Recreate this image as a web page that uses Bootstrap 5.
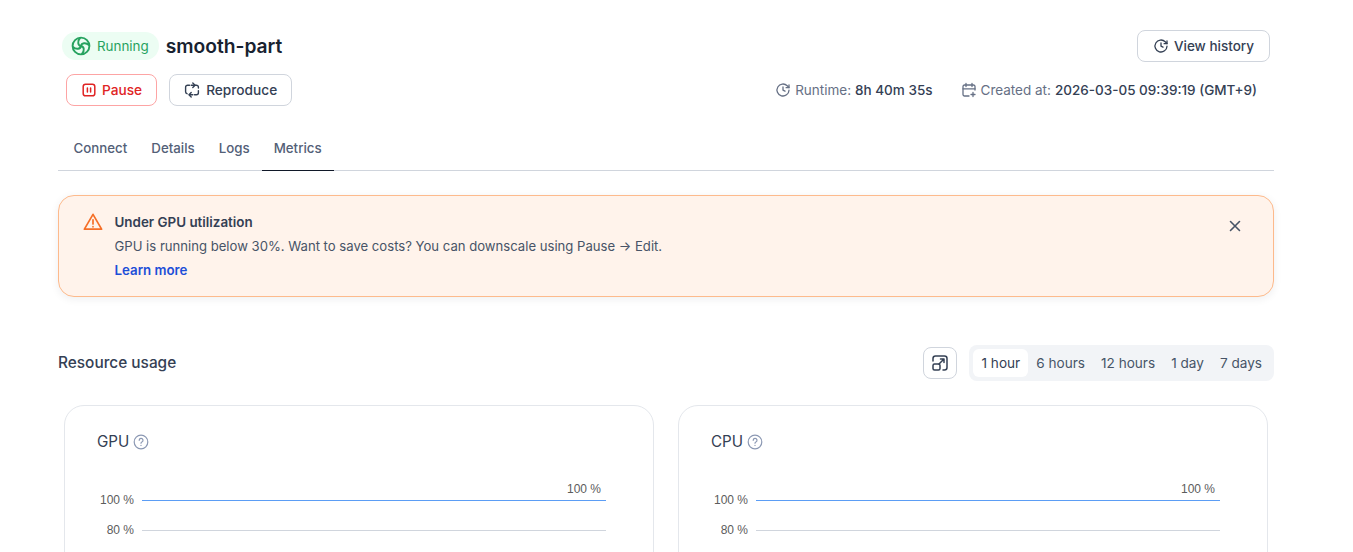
<!DOCTYPE html>
<html lang="en">
<head>
    <meta charset="UTF-8">
    <meta name="viewport" content="width=device-width, initial-scale=1.0">
    <title>smooth-part - Metrics</title>
    <link rel="stylesheet" href="https://cdn.jsdelivr.net/npm/bootstrap@5.3.0/dist/css/bootstrap.min.css">
    <style>
        html, body { height: 552px; overflow: hidden; }
        body { font-family: Inter, "Liberation Sans", sans-serif; font-size: 13.5px; color: #344054; background: #fff; }
        .page-wrap { width: 1216px; margin-left: 58px; padding-top: 30px; }
        .head-top { height: 32px; padding-left: 4px; padding-right: 4px; }
        .status-pill { height: 28px; padding: 0 10px 0 9px; gap: 6px; border-radius: 14px; background: #ecfdf3; color: #27a25f; font-size: 13.4px; }
        .inst-name { font-size: 19.2px; font-weight: 600; color: #182230; margin-left: 7px; line-height: 32px; }
        .head-actions { margin-top: 12px; height: 32px; padding-left: 8px; padding-right: 17px; }
        .act-btn { height: 32px; padding: 2px 15px 0; gap: 5px; font-size: 13.5px; font-weight: 500; line-height: 1; border-radius: 8px; border: 1px solid #d0d5dd; color: #344054; background: #fff; }
        .act-btn svg { margin-top: -2px; }
        .act-pause { color: #e02424; border-color: #fda4a4; padding: 2px 14px 0; font-size: 13.7px; }
        .act-repro { margin-left: 12px; padding: 2px 14px 0; gap: 6px; font-size: 13.7px; }
        .meta-group { gap: 28px; }
        .meta-txt { color: #667085; gap: 4px; font-size: 13.5px; }
        .meta-txt b { font-weight: 500; color: #344054; }
        .tab-row { margin-top: 23px; height: 42px; border-bottom: 1px solid #d0d5dd; padding-left: 3.500px; }
        .tab-item { padding: 0 12px; height: 42px; line-height: 38px; color: #536077; font-weight: 500; font-size: 13.3px; }
        .tab-item.on { border-bottom: 1px solid #101828; }
        .warn-box { margin-top: 24px; height: 102px; border: 1px solid #fdba8c; border-radius: 16px; background: #fff3eb; box-shadow: 0 2px 8px rgba(16,24,40,.07); padding: 16px 24px; gap: 11.5px; }
        .warn-title { font-size: 13.4px; font-weight: 600; color: #344054; line-height: 20px; }
        .warn-text { font-size: 13.12px; color: #475467; line-height: 20px; margin-top: 4px; }
        .warn-link { display: block; font-size: 13.3px; color: #1d4ed8; font-weight: 600; line-height: 20px; margin-top: 4px; text-decoration: none; }
        .warn-close { margin-left: auto; margin-top: 6px; margin-right: 6px; width: 16px; height: 16px; }
        .usage-head { margin-top: 48px; height: 36px; }
        .usage-title { font-size: 15.4px; font-weight: 500; color: #344054; }
        .icon-box { width: 34px; height: 32px; border: 1px solid #d0d5dd; border-radius: 8px; margin-right: 12px; background: #fff; }
        .range-group { height: 36px; padding: 4px; border-radius: 8px; background: #f2f4f7; }
        .range-item { height: 28px; line-height: 28px; padding: 0 8px; color: #475467; font-size: 13.6px; border-radius: 6px; }
        .range-item.on { background: #fff; color: #344054; padding-left: 9px; }
        .chart-grid { margin-top: 24px; padding: 0 6px; gap: 24px; }
        .chart-box { flex: 1 1 0; height: 300px; border: 1px solid #e4e7ec; border-radius: 20px; padding: 24px 32px; }
        .chart-name { font-size: 15.2px; color: #344054; font-weight: 400; line-height: 24px; gap: 4px; }
        .chart-svg { display: block; margin-left: -33px; margin-top: 26px; }
        .chart-svg text { font-family: "Liberation Sans", Arial, sans-serif; font-size: 12px; fill: #5c5c5c; }
    </style>
</head>
<body>

    <div class="page-wrap">
        <div class="head-top d-flex align-items-center">
            <span class="status-pill d-inline-flex align-items-center">
                <svg width="20" height="20" viewBox="0 0 20 20" fill="none" stroke="#27a25f" stroke-width="1.9" stroke-linecap="round">
                    <circle cx="10" cy="10" r="8.4"/>
                    <path d="M10 10C6.800 9.500 6.200 5.200 9 2"/>
                    <path d="M10 10C10.500 6.800 14.800 6.200 18 9"/>
                    <path d="M10 10C13.200 10.500 13.800 14.800 11 18"/>
                    <path d="M10 10C9.500 13.200 5.200 13.800 2 11"/>
                </svg>
                Running
            </span>
            <span class="inst-name">smooth-part</span>
            <button type="button" class="act-btn d-inline-flex align-items-center ms-auto">
                <svg width="16" height="16" viewBox="0 0 16 16" fill="none" stroke="#344054" stroke-width="1.3" stroke-linecap="round" stroke-linejoin="round">
                    <path d="M14 8.2A6 6 0 1 1 12.2 3.7L14 5.5"/>
                    <path d="M14 2.8v2.9h-2.9"/>
                    <path d="M8 5v3.2l2 1"/>
                </svg>
                View history
            </button>
        </div>

        <div class="head-actions d-flex align-items-center">
            <button type="button" class="act-btn act-pause d-inline-flex align-items-center">
                <svg width="16" height="16" viewBox="0 0 16 16" fill="none" stroke="#e02424" stroke-width="1.5" stroke-linecap="round">
                    <rect x="2.2" y="2.2" width="11.6" height="11.6" rx="2.4"/>
                    <path d="M6.4 6v4M9.6 6v4"/>
                </svg>
                Pause
            </button>
            <button type="button" class="act-btn act-repro d-inline-flex align-items-center">
                <svg width="16" height="16" viewBox="0 0 16 16" fill="none" stroke="#344054" stroke-width="1.4" stroke-linecap="round" stroke-linejoin="round">
                    <path d="M5.5 3.2H3.6A2 2 0 0 0 1.6 5.2v4.6a2 2 0 0 0 1.4 1.9"/>
                    <path d="M7.2 3.2h5.2a2 2 0 0 1 2 2v.8"/>
                    <path d="M10.5 12.8h1.9a2 2 0 0 0 2-2V8.6"/>
                    <path d="M8.8 12.8H5.4"/>
                    <path d="M8.8 1 11 3.2 8.8 5.4"/>
                    <path d="M7.2 10.6 5 12.8 7.2 15"/>
                </svg>
                Reproduce
            </button>
            <div class="meta-group ms-auto d-flex align-items-center">
                <span class="meta-txt d-inline-flex align-items-center">
                    <svg width="16" height="16" viewBox="0 0 16 16" fill="none" stroke="#667085" stroke-width="1.3" stroke-linecap="round" stroke-linejoin="round">
                        <path d="M14 8.2A6 6 0 1 1 12.2 3.7L14 5.5"/>
                        <path d="M14 2.8v2.9h-2.9"/>
                        <path d="M8 5v3.2l2 1"/>
                    </svg>
                    Runtime: <b>8h 40m 35s</b>
                </span>
                <span class="meta-txt d-inline-flex align-items-center">
                    <svg width="16" height="16" viewBox="0 0 16 16" fill="none" stroke="#667085" stroke-width="1.3" stroke-linecap="round" stroke-linejoin="round">
                        <path d="M8 14H3.5A1.5 1.5 0 0 1 2 12.5v-8A1.5 1.5 0 0 1 3.5 3h9A1.5 1.5 0 0 1 14 4.500V8"/>
                        <path d="M5 1.500V4.500M11 1.500V4.500M2 6.800h12"/>
                        <path d="M12 10.500v4M10 12.500h4"/>
                    </svg>
                    Created at: <b>2026-03-05 09:39:19 (GMT+9)</b>
                </span>
            </div>
        </div>

        <div class="tab-row d-flex">
            <div class="tab-item">Connect</div>
            <div class="tab-item">Details</div>
            <div class="tab-item">Logs</div>
            <div class="tab-item on">Metrics</div>
        </div>

        <div class="warn-box d-flex">
            <svg class="flex-shrink-0" width="20" height="20" viewBox="0 0 20 20" fill="none" stroke="#f56f28" stroke-width="1.7" stroke-linecap="round" stroke-linejoin="round">
                <path d="M10 2.300 18.600 17.200H1.400Z"/>
                <path d="M10 7.800v4.200M10 14.700v.1"/>
            </svg>
            <div>
                <div class="warn-title">Under GPU utilization</div>
                <div class="warn-text">GPU is running below 30%. Want to save costs? You can downscale using Pause → Edit.</div>
                <a class="warn-link" href="#">Learn more</a>
            </div>
            <svg class="warn-close" viewBox="0 0 16 16" fill="none" stroke="#475467" stroke-width="1.6" stroke-linecap="round">
                <path d="M3.500 3.500l9 9M12.500 3.500l-9 9"/>
            </svg>
        </div>

        <div class="usage-head d-flex align-items-center">
            <div class="usage-title">Resource usage</div>
            <div class="ms-auto d-flex align-items-center">
                <div class="icon-box d-flex align-items-center justify-content-center">
                    <svg width="18" height="18" viewBox="0 0 18 18" fill="none" stroke="#344054" stroke-width="1.500" stroke-linecap="round" stroke-linejoin="round">
                        <path d="M2 7V4.500A2.500 2.500 0 0 1 4.500 2h9A2.500 2.500 0 0 1 16 4.500v9a2.500 2.500 0 0 1-2.500 2.500H12"/>
                        <rect x="2" y="10" width="7" height="6" rx="1.500"/>
                        <path d="M8 10 13 5M9.500 5H13v3.500"/>
                    </svg>
                </div>
                <div class="range-group d-flex">
                    <div class="range-item on">1 hour</div>
                    <div class="range-item">6 hours</div>
                    <div class="range-item">12 hours</div>
                    <div class="range-item">1 day</div>
                    <div class="range-item">7 days</div>
                </div>
            </div>
        </div>

        <div class="chart-grid d-flex">
            <div class="chart-box">
                <div class="chart-name d-flex align-items-center">
                    GPU
                    <svg width="16" height="16" viewBox="0 0 16 16" fill="none" stroke="#8b98b3" stroke-width="1.200" stroke-linecap="round">
                        <circle cx="8" cy="8" r="6.800"/>
                        <path d="M6.200 6.300a1.900 1.900 0 1 1 2.700 1.700c-.6.300-.9.700-.9 1.200M8 11.300v.1"/>
                    </svg>
                </div>
                <svg class="chart-svg" width="550" height="120" viewBox="0 0 550 120">
                    <text x="70" y="24" text-anchor="end">100 %</text>
                    <text x="70" y="54" text-anchor="end">80 %</text>
                    <line x1="78" y1="20.500" x2="542" y2="20.500" stroke="#5b9df5"/>
                    <line x1="78" y1="50.500" x2="542" y2="50.500" stroke="#d0d5dd"/>
                    <text x="537" y="13" text-anchor="end">100 %</text>
                </svg>
            </div>
            <div class="chart-box">
                <div class="chart-name d-flex align-items-center">
                    CPU
                    <svg width="16" height="16" viewBox="0 0 16 16" fill="none" stroke="#8b98b3" stroke-width="1.200" stroke-linecap="round">
                        <circle cx="8" cy="8" r="6.800"/>
                        <path d="M6.200 6.300a1.900 1.900 0 1 1 2.700 1.700c-.6.300-.9.700-.9 1.200M8 11.300v.1"/>
                    </svg>
                </div>
                <svg class="chart-svg" width="550" height="120" viewBox="0 0 550 120">
                    <text x="70" y="24" text-anchor="end">100 %</text>
                    <text x="70" y="54" text-anchor="end">80 %</text>
                    <line x1="78" y1="20.500" x2="542" y2="20.500" stroke="#5b9df5"/>
                    <line x1="78" y1="50.500" x2="542" y2="50.500" stroke="#d0d5dd"/>
                    <text x="537" y="13" text-anchor="end">100 %</text>
                </svg>
            </div>
        </div>
    </div>

    <script src="https://cdn.jsdelivr.net/npm/bootstrap@5.3.0/dist/js/bootstrap.bundle.min.js"></script>
</body>
</html>
